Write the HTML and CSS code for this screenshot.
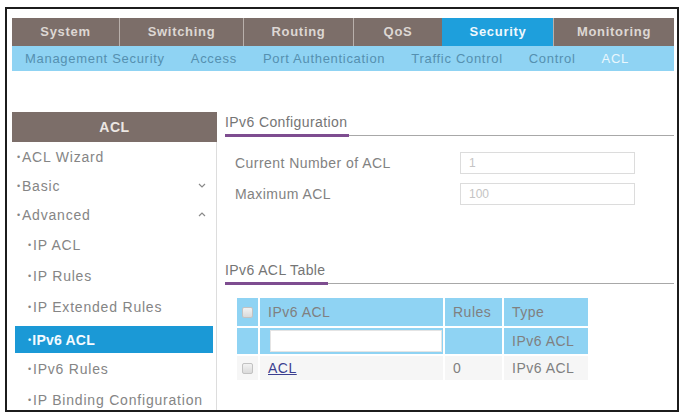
FILE: index.html
```html
<!DOCTYPE html>
<html lang="en">
<head>
    <meta charset="UTF-8">
    <title>ACL - IPv6 ACL</title>
    <link rel="stylesheet" href="styles.css">
</head>
<body>
    <div class="frame">
        <nav class="topnav">
            <a class="tab tab-system">System</a>
            <a class="tab tab-switching">Switching</a>
            <a class="tab tab-routing">Routing</a>
            <a class="tab tab-qos">QoS</a>
            <a class="tab tab-security active">Security</a>
            <a class="tab tab-monitoring">Monitoring</a>
        </nav>
        <nav class="subnav">
            <a>Management Security</a>
            <a>Access</a>
            <a>Port Authentication</a>
            <a>Traffic Control</a>
            <a>Control</a>
            <a class="active">ACL</a>
        </nav>

        <div class="content">
            <aside class="sidebar">
                <div class="side-title">ACL</div>
                <ul class="side-menu">
                    <li class="item">ACL Wizard</li>
                    <li class="item">Basic
                        <svg class="chevron" width="8" height="5" viewBox="0 0 8 5"><path d="M1 1l3 3 3-3" fill="none" stroke="#8a8a8a" stroke-width="1.2"/></svg>
                    </li>
                    <li class="item">Advanced
                        <svg class="chevron" width="8" height="5" viewBox="0 0 8 5"><path d="M1 4l3-3 3 3" fill="none" stroke="#8a8a8a" stroke-width="1.2"/></svg>
                    </li>
                    <li class="item sub">IP ACL</li>
                    <li class="item sub">IP Rules</li>
                    <li class="item sub">IP Extended Rules</li>
                    <li class="item sub selected"><span>IPv6 ACL</span></li>
                    <li class="item sub">IPv6 Rules</li>
                    <li class="item sub">IP Binding Configuration</li>
                </ul>
            </aside>

            <main class="panel">
                <div class="section-head"><span>IPv6 Configuration</span></div>
                <div class="form-rows">
                    <div class="form-row">
                        <label>Current Number of ACL</label>
                        <input type="text" value="1" readonly>
                    </div>
                    <div class="form-row">
                        <label>Maximum ACL</label>
                        <input type="text" value="100" readonly>
                    </div>
                </div>

                <div class="section-head table-title"><span>IPv6 ACL Table</span></div>
                <table class="acl-table">
                    <colgroup>
                        <col class="col-check">
                        <col class="col-name">
                        <col class="col-rules">
                        <col class="col-type">
                    </colgroup>
                    <thead>
                        <tr class="head-row">
                            <th><span class="checkbox"></span></th>
                            <th>IPv6 ACL</th>
                            <th>Rules</th>
                            <th>Type</th>
                        </tr>
                        <tr class="filter-row">
                            <th></th>
                            <th><input type="text" class="filter-input"></th>
                            <th></th>
                            <th>IPv6 ACL</th>
                        </tr>
                    </thead>
                    <tbody>
                        <tr class="data-row">
                            <td><span class="checkbox"></span></td>
                            <td><a href="#" class="acl-link">ACL</a></td>
                            <td>0</td>
                            <td>IPv6 ACL</td>
                        </tr>
                    </tbody>
                </table>
            </main>
        </div>
    </div>
</body>
</html>
```

FILE: styles.css
```css
body {
    margin: 0;
    background-color: #fff;
    font-family: "Liberation Sans", Arial, sans-serif;
    color: #808080;
}
.frame {
    box-sizing: border-box;
    margin: 7px 2px 0 5px;
    height: 405px;
    border: 2px solid #1c1c1c;
    padding: 9px 3px 0 5px;
    overflow: hidden;
    background-color: #fff;
}
.topnav {
    display: flex;
    height: 28px;
    background-color: #7c6e69;
}
.tab {
    box-sizing: border-box;
    border-left: 1px solid #b9b0ab;
    color: #ddd7d3;
    font-size: 13px;
    font-weight: bold;
    letter-spacing: 0.7px;
    line-height: 28px;
    text-align: center;
}
.tab-system { width: 107px; border-left: none; }
.tab-switching { width: 124px; }
.tab-routing { width: 110px; }
.tab-qos { width: 89px; }
.tab-security { width: 111px; }
.tab-monitoring { flex: 1; }
.tab.active {
    background-color: #1e9fdc;
    color: #eef8fd;
    border-left-color: #1e9fdc;
}
.subnav {
    display: flex;
    gap: 26px;
    height: 25px;
    padding-left: 13px;
    background-color: #8fd3f3;
}
.subnav a {
    color: #5590b0;
    font-size: 13px;
    letter-spacing: 0.7px;
    line-height: 25px;
}
.subnav a.active {
    color: #eaf7fd;
}
.content {
    display: flex;
    margin-top: 41px;
}
.sidebar {
    width: 205px;
    flex-shrink: 0;
}
.side-title {
    height: 30px;
    line-height: 30px;
    background-color: #7c6e69;
    color: #ece7e3;
    font-size: 14px;
    font-weight: bold;
    letter-spacing: 0.6px;
    text-align: center;
}
.side-menu {
    list-style: none;
    margin: 0;
    padding: 0;
    border-right: 1px solid #ddd;
    height: 270px;
}
.item {
    position: relative;
    display: flex;
    align-items: center;
    height: 29px;
    padding-left: 5px;
    font-size: 14px;
    letter-spacing: 0.8px;
    color: #858585;
    white-space: nowrap;
}
.item::before {
    content: "\2022";
    font-size: 9px;
    margin-right: 1px;
}
.item.sub {
    height: 31px;
    padding-left: 16px;
}
.chevron {
    position: absolute;
    right: 10px;
    top: 12px;
}
.item.selected {
    padding-left: 0;
}
.item.selected::before {
    content: none;
}
.item.selected span {
    display: flex;
    align-items: center;
    box-sizing: border-box;
    width: 198px;
    height: 27px;
    margin: 4px 0 0 3px;
    padding-left: 13px;
    background-color: #1b99d6;
    color: #f4fbff;
    font-weight: bold;
    letter-spacing: 0.2px;
}
.item.selected span::before {
    content: "\2022";
    font-size: 9px;
    margin-right: 1px;
}
.panel {
    flex: 1;
    padding-left: 8px;
}
.section-head {
    border-bottom: 1px solid #a8a8a8;
}
.section-head span {
    display: inline-block;
    padding: 1px 2px 3px 0;
    margin-bottom: -2px;
    border-bottom: 3px solid #7e4d90;
    font-size: 14px;
    line-height: 18px;
    letter-spacing: 0.4px;
    color: #757575;
}
.form-rows {
    display: flex;
    flex-direction: column;
    gap: 9px;
    margin: 16px 0 0 10px;
}
.form-row {
    display: flex;
    align-items: center;
}
.form-row label {
    width: 225px;
    font-size: 14px;
    letter-spacing: 0.45px;
    color: #828282;
}
.form-row input {
    box-sizing: border-box;
    width: 175px;
    height: 22px;
    border: 1px solid #dcdcdc;
    padding: 0 8px;
    font-family: "Liberation Sans", Arial, sans-serif;
    font-size: 12px;
    color: #c4c4c4;
    background-color: #fff;
}
.table-title {
    margin-top: 55px;
}
.acl-table {
    margin: 12px 0 0 10px;
    width: 353px;
    table-layout: fixed;
    border-collapse: collapse;
    font-size: 14px;
    letter-spacing: 0.5px;
}
.col-check { width: 23px; }
.col-name { width: 185px; }
.col-rules { width: 59px; }
.col-type { width: 86px; }
.acl-table th,
.acl-table td {
    border: 2px solid #fff;
    padding: 0 0 0 8px;
    text-align: left;
    font-weight: normal;
    color: #808080;
    white-space: nowrap;
}
.acl-table th:first-child,
.acl-table td:first-child {
    padding-left: 5px;
}
.head-row th {
    height: 28px;
    background-color: #8fd3f3;
}
.filter-row th {
    height: 26px;
    background-color: #8fd3f3;
}
.data-row td {
    height: 24px;
    background-color: #f6f6f6;
}
.checkbox {
    display: block;
    box-sizing: border-box;
    width: 11px;
    height: 11px;
    border: 1px solid #c2c2c2;
    border-radius: 2px;
    background: linear-gradient(#f2f2f2, #dadada);
}
.filter-input {
    display: block;
    box-sizing: border-box;
    width: 172px;
    height: 22px;
    margin-left: 2px;
    border: 1px solid #e4e4e4;
    background-color: #fff;
}
.acl-link {
    color: #3c3f90;
    text-decoration: underline;
}
```
